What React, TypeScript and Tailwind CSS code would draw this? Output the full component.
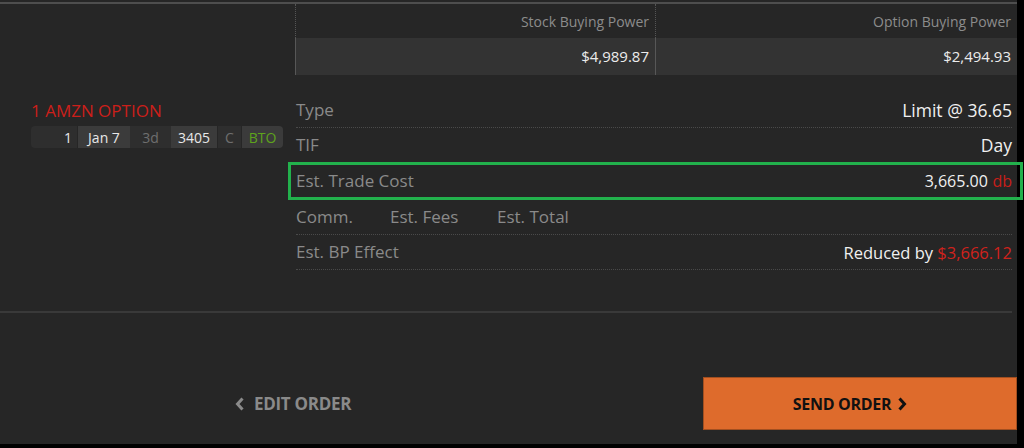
import React from "react";

const font = { fontFamily: '"Open Sans", "Liberation Sans", sans-serif' };

function Chip({ text, w, light, tone }: { text: string; w: string; light?: boolean; tone?: string }) {
  return (
    <div
      className={`flex h-full items-center justify-center ${w} ${light ? "bg-[#3b3b3b]" : "bg-[#2e2e2e]"} ${tone ?? "text-[#e8e8e8]"}`}
    >
      {text}
    </div>
  );
}

function Row({ label, children, h }: { label: React.ReactNode; children?: React.ReactNode; h: string }) {
  return (
    <div className={`flex items-center justify-between border-b border-dotted border-[#4a4a4a] ${h}`}>
      <div className="text-[17px] text-[#8a8a8a]">{label}</div>
      <div className="text-[17.5px] text-[#f0f0f0]">{children}</div>
    </div>
  );
}

export default function App() {
  return (
    <div className="h-[448px] w-[1024px] overflow-hidden bg-black" style={font}>
      <div className="relative h-[444px] w-[1017px] bg-[#262626]">
        {/* top rule */}
        <div className="pt-[2px]">
          <div className="h-[2px] bg-[#4e4e4e]" />
        </div>

        <div className="flex">
          {/* left: order leg */}
          <div className="w-[295px] shrink-0 pl-[31px] pt-[94px]">
            <div className="text-[17px] leading-[26px] text-[#cc1f1a]">1 AMZN OPTION</div>
            <div className="mt-[2px] flex h-[22px] w-[252px] overflow-hidden rounded-[4px] text-[14px]">
              <div className="flex h-full w-[46px] items-center justify-end bg-[#2e2e2e] pr-[5px] text-[#e8e8e8]">1</div>
              <div className="w-px bg-[#262626]" />
              <Chip text="Jan 7" w="w-[52px]" light />
              <Chip text="3d" w="w-[41px]" tone="text-[#6e6e6e]" />
              <Chip text="3405" w="w-[46px]" light />
              <div className="w-px bg-[#262626]" />
              <Chip text="C" w="w-[23px]" tone="text-[#6e6e6e]" />
              <div className="w-px bg-[#262626]" />
              <div className="flex h-full flex-1 items-center justify-center bg-[#3b3b3b] text-[#5ea31c]">BTO</div>
            </div>
          </div>

          {/* right: buying power + summary */}
          <div className="flex-1">
            <div className="grid grid-cols-[361px_1fr]">
              <div className="flex h-[34px] items-center justify-end border-l border-r border-dotted border-[#555] pr-[6px] text-[14px] text-[#8c8c8c]">
                Stock Buying Power
              </div>
              <div className="flex h-[34px] items-center justify-end pr-[6px] text-[14px] text-[#8c8c8c]">
                Option Buying Power
              </div>
              <div className="flex h-[37px] items-center justify-end border-l border-r border-[#575757] bg-[#333333] pr-[6px] text-[15px] text-[#ececec]">
                $4,989.87
              </div>
              <div className="flex h-[37px] items-center justify-end bg-[#333333] pr-[6px] text-[15px] text-[#ececec]">
                $2,494.93
              </div>
            </div>

            <div className="mt-[18px] mr-[5px] pl-px">
              <Row label="Type" h="h-[35px]">Limit @ 36.65</Row>
              <Row label="TIF" h="h-[35px]">Day</Row>
              <div className="relative">
                <Row label="Est. Trade Cost" h="h-[36px]">
                  <span className="text-[16px]">3,665.00</span>{" "}
                  <span className="text-[16px] text-[#c81e19]">db</span>
                </Row>
                <div className="pointer-events-none absolute -left-[8px] -right-[11px] -top-[1px] -bottom-[1px] border-[3px] border-[#22b14c]" />
              </div>
              <div className="flex h-[36px] items-center border-b border-dotted border-[#4a4a4a] text-[17px] text-[#8a8a8a]">
                <span className="w-[94px]">Comm.</span>
                <span className="w-[107px]">Est. Fees</span>
                <span>Est. Total</span>
              </div>
              <Row label="Est. BP Effect" h="h-[35px]">
                <span className="text-[16.5px]">Reduced by </span>
                <span className="text-[16.5px] text-[#d0221c]">$3,666.12</span>
              </Row>
            </div>
          </div>
        </div>

        {/* divider */}
        <div className="mt-[41px] mr-[5px] h-[2px] bg-[#393939]" />

        {/* actions */}
        <div className="mt-[64px] flex items-center">
          <div className="flex w-[703px] items-center pl-[235px]">
            <button className="flex items-center gap-[9px] text-[17px] font-bold tracking-[-0.3px] text-[#8a8a8a]">
              <svg width="10" height="14" viewBox="0 0 10 14">
                <path d="M7.5 1.5 L2.5 7 L7.5 12.5" fill="none" stroke="#8a8a8a" strokeWidth="3" />
              </svg>
              EDIT ORDER
            </button>
          </div>
          <button className="flex h-[53px] flex-1 items-center justify-center gap-[6px] border border-[#a24f20] bg-[#de6b2c] pr-[20px] text-[16px] font-bold tracking-[-0.3px] text-[#111]">
            SEND ORDER
            <svg width="10" height="14" viewBox="0 0 10 14">
              <path d="M2.5 1.5 L7.5 7 L2.5 12.5" fill="none" stroke="#111" strokeWidth="3" />
            </svg>
          </button>
        </div>
      </div>
    </div>
  );
}
